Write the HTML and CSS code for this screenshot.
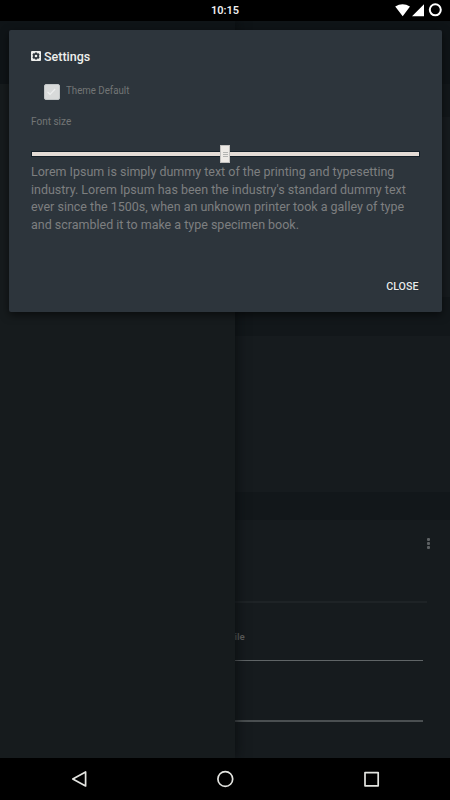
FILE: index.html
```html
<!DOCTYPE html>
<html lang="en">
<head>
<meta charset="utf-8">
<title>Settings</title>
<link rel="stylesheet" href="styles.css">
</head>
<body>
<header class="status">
  <span class="clock">10:15</span>
  <svg class="status-icons" width="50" height="21" viewBox="0 0 50 21">
    <path fill="#fff" d="M.2 6.5Q7.5 2 15 6.5L7.7 16.3ZM17 16.3 29 4.2V16.3Z"/>
    <circle cx="40.3" cy="9.8" r="5.5" fill="none" stroke="#fff" stroke-width="2"/>
  </svg>
</header>
<main class="screen">
  <aside class="drawer"><div class="drawer-head"></div></aside>
  <section class="content">
    <div class="toolbar"></div>
    <div class="strip"></div>
    <div class="panel"></div>
    <div class="strip gap-top"></div>
    <div class="panel middle"></div>
    <div class="strip divider"></div>
    <div class="form">
      <div class="menu"><i></i><i></i><i></i></div>
      <div class="rule faint"></div>
      <div class="label">ile</div>
      <div class="rule"></div>
      <div class="rule last"></div>
    </div>
  </section>
  <section class="dialog" role="dialog">
    <h1 class="title">
      <svg width="10" height="10" viewBox="0 0 10 10">
        <rect width="10" height="10" rx="1" fill="#eeefed"/>
        <path d="M4 1.4H6L6.3 2.6 7.7 2.2 8.6 3.8 7.8 5 8.6 6.2 7.7 7.8 6.3 7.4 6 8.6H4L3.7 7.4 2.3 7.8 1.4 6.2 2.2 5 1.4 3.8 2.3 2.2 3.7 2.6Z" fill="#2d353c"/>
        <circle cx="5" cy="5" r="1.3" fill="#eeefed"/>
      </svg>
      <span>Settings</span>
    </h1>
    <div class="check-row">
      <svg class="box" width="16" height="16" viewBox="0 0 16 16">
        <rect x=".5" y=".5" width="15" height="15" rx="1.5" fill="#d8dada" stroke="#c2c6c7"/>
        <path d="M3.5 8 6 10.3 11.2 5" fill="none" stroke="#eceeee" stroke-width="1.2"/>
      </svg>
      <span>Theme Default</span>
    </div>
    <div class="size-label">Font size</div>
    <div class="slider"><div class="thumb"><i></i><i></i><i></i></div></div>
    <p class="sample">Lorem Ipsum is simply dummy text of the printing and typesetting<br>industry. Lorem Ipsum has been the industry's standard dummy text<br>ever since the 1500s, when an unknown printer took a galley of type<br>and scrambled it to make a type specimen book.</p>
    <div class="close">CLOSE</div>
  </section>
</main>
<nav class="navbar">
  <svg width="450" height="42" viewBox="0 0 450 42" fill="none" stroke="#e4e5e1" stroke-width="1.7" stroke-linejoin="round">
    <path d="M85.6 14V28L72.8 21Z"/>
    <circle cx="225.3" cy="21" r="7.4"/>
    <rect x="365" y="14.6" width="13.2" height="13.2"/>
  </svg>
</nav>
</body>
</html>
```

FILE: styles.css
```css
* { box-sizing: border-box; }
body {
  margin: 0;
  width: 450px;
  height: 800px;
  overflow: hidden;
  display: grid;
  grid-template-rows: 21px 737px 42px;
  background: #000;
  font-family: Roboto, sans-serif;
}
.status {
  display: grid;
  grid-template-columns: 1fr 1fr;
  align-items: center;
  color: #eee;
}
.clock {
  grid-column: 1 / 3;
  grid-row: 1;
  text-align: center;
  font-size: 11px;
  line-height: 21px;
  font-weight: 600;
}
.status-icons {
  grid-column: 2;
  grid-row: 1;
  justify-self: end;
  margin-right: 5px;
}
.screen {
  position: relative;
  display: grid;
  grid-template-columns: 234.5px 1fr;
  background: #161b1e;
  overflow: hidden;
}
.drawer {
  z-index: 1;
  background: #161b1d;
  box-shadow: 0 0 12px #080b0d;
}
.drawer-head { height: 63px; background: #0f1417; }
.content { display: flex; flex-direction: column; }
.toolbar { height: 63px; background: #0f1417; }
.strip { height: 33px; background: #12171a; }
.panel { height: 180px; }
.gap-top { height: 39px; }
.middle { height: 156px; }
.divider { height: 28px; }
.form { display: flex; flex-direction: column; height: 238px; }
.menu {
  align-self: flex-end;
  display: grid;
  gap: 1px;
  margin: 18px 20px 0 0;
}
.menu i { width: 3px; height: 3px; border-radius: 1px; background: #5d6163; }
.rule { height: 1px; width: 188px; background: #606567; }
.faint { width: 192px; height: 2px; margin-top: 52px; background: #1e2326; }
.label {
  margin-top: 27px;
  height: 13px;
  font-size: 9.7px;
  line-height: 13px;
  font-weight: 600;
  color: #606262;
}
.label + .rule { margin-top: 17px; }
.last { margin-top: 59px; height: 2px; background: #4a4f51; }
.dialog {
  position: absolute;
  z-index: 2;
  left: 9px;
  top: 9px;
  width: 433px;
  height: 282px;
  padding: 18px 22px 0;
  display: flex;
  flex-direction: column;
  border-radius: 2px;
  background: #2d353c;
  box-shadow: 0 3px 9px rgba(0, 0, 0, .55);
}
.title {
  display: flex;
  align-items: center;
  gap: 3px;
  margin: 0;
  height: 16px;
  font-size: 13px;
  font-weight: 500;
  color: #eeefed;
}
.title span { transform: scaleX(.96); transform-origin: left; }
.check-row {
  display: flex;
  align-items: center;
  gap: 6px;
  height: 18px;
  margin: 19px 0 0 13px;
  font-size: 10px;
  color: #737576;
}
.check-row span {
  position: relative;
  top: -2px;
  transform: scaleX(.97);
  transform-origin: left;
}
.size-label {
  margin-top: 14px;
  height: 14px;
  font-size: 10px;
  line-height: 14px;
  color: #737576;
}
.slider {
  display: grid;
  place-items: center;
  height: 4px;
  margin: 23px 1px 0 .5px;
  background: #e4dcd6;
  box-shadow: 0 0 0 1px #142029;
}
.thumb {
  width: 10px;
  height: 18px;
  margin: -7px 0;
  display: grid;
  align-content: center;
  justify-items: center;
  gap: 1px;
  background: #eeeae6;
  border: 1px solid #c3c1bf;
}
.thumb i { width: 5px; height: 1px; background: #b4b4b2; }
.sample {
  margin: 7px 0 0;
  font-size: 13px;
  line-height: 17.5px;
  white-space: nowrap;
  color: #7d7f80;
  transform: scaleX(.96);
  transform-origin: left;
}
.close {
  margin: 47px 1.5px 0 0;
  align-self: flex-end;
  font-size: 10.7px;
  line-height: 14px;
  font-weight: 500;
  color: #e9ebec;
  text-shadow: 0 0 1px #0d1820;
}
.navbar { background: #000; }
.navbar svg { display: block; }
```
